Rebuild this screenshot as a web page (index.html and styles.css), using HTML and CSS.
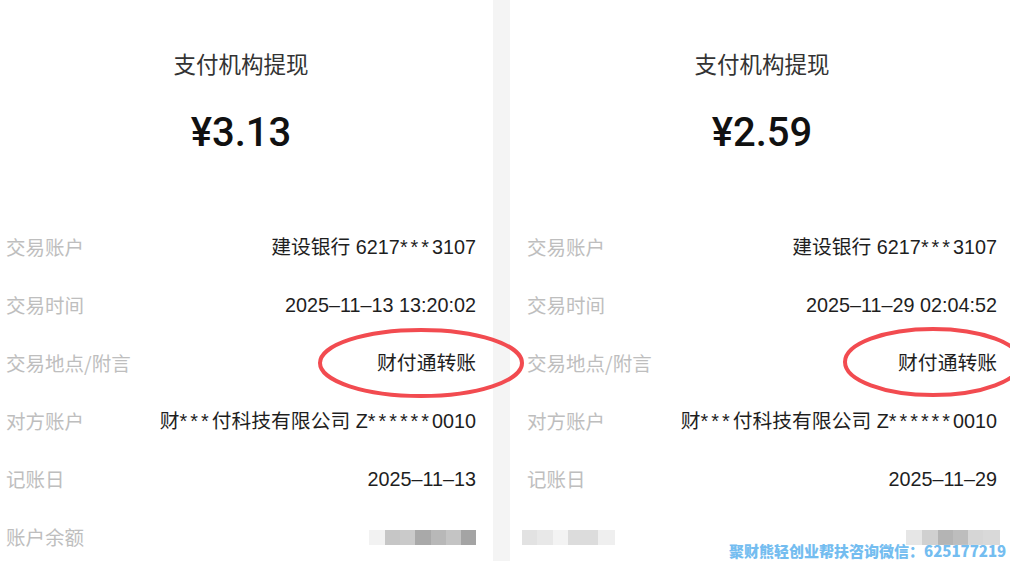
FILE: index.html
```html
<!DOCTYPE html>
<html lang="zh-CN">
<head>
<meta charset="utf-8">
<title>支付机构提现</title>
<link rel="stylesheet" href="styles.css">
</head>
<body>
<div class="page">
  <section class="panel panel-left">
    <h1 class="title">支付机构提现</h1>
    <div class="amount">¥3.13</div>
    <ul class="rows">
      <li class="row"><span class="label">交易账户</span><span class="value">建设银行 6217<span class="mask">***</span>3107</span></li>
      <li class="row"><span class="label">交易时间</span><span class="value">2025–11–13 13:20:02</span></li>
      <li class="row"><span class="label">交易地点/附言</span><span class="value">财付通转账</span></li>
      <li class="row"><span class="label">对方账户</span><span class="value">财<span class="mask">***</span>付科技有限公司 Z<span class="mask">******</span>0010</span></li>
      <li class="row"><span class="label">记账日</span><span class="value">2025–11–13</span></li>
      <li class="row"><span class="label">账户余额</span><span class="blur blur-left-val"></span></li>
    </ul>
  </section>
  <div class="gutter"></div>
  <section class="panel panel-right">
    <h1 class="title">支付机构提现</h1>
    <div class="amount">¥2.59</div>
    <ul class="rows">
      <li class="row"><span class="label">交易账户</span><span class="value">建设银行 6217<span class="mask">***</span>3107</span></li>
      <li class="row"><span class="label">交易时间</span><span class="value">2025–11–29 02:04:52</span></li>
      <li class="row"><span class="label">交易地点/附言</span><span class="value">财付通转账</span></li>
      <li class="row"><span class="label">对方账户</span><span class="value">财<span class="mask">***</span>付科技有限公司 Z<span class="mask">******</span>0010</span></li>
      <li class="row"><span class="label">记账日</span><span class="value">2025–11–29</span></li>
      <li class="row"><span class="blur blur-right-label"></span><span class="blur blur-right-val"></span></li>
    </ul>
  </section>
  <svg class="marks" width="1010" height="561" viewBox="0 0 1010 561" aria-hidden="true">
    <ellipse cx="421" cy="363" rx="101" ry="33" fill="none" stroke="#f24b50" stroke-width="4"/>
    <ellipse cx="933" cy="362" rx="88" ry="33" fill="none" stroke="#f24b50" stroke-width="4"/>
  </svg>
  <div class="watermark">聚财熊轻创业帮扶咨询微信：625177219</div>
</div>
</body>
</html>
```

FILE: styles.css
```css
html, body {
  margin: 0;
  padding: 0;
  background: #ffffff;
}
body {
  width: 1010px;
  height: 561px;
  overflow: hidden;
}
.page {
  position: relative;
  display: flex;
  width: 1010px;
  height: 561px;
  overflow: hidden;
  background: #ffffff;
}
.panel {
  box-sizing: border-box;
  height: 561px;
  padding-top: 48px;
  background: #ffffff;
}
.panel-left {
  width: 493px;
  padding-left: 6px;
  padding-right: 17px;
}
.panel-right {
  width: 500px;
  padding-left: 17px;
  padding-right: 13px;
}
.gutter {
  width: 17px;
  background: #f4f4f4;
}
.title {
  margin: 0;
  font-family: "Noto Sans CJK SC", sans-serif;
  font-weight: 400;
  font-size: 22.5px;
  line-height: 30px;
  color: #333333;
  text-align: center;
}
.amount {
  margin-top: 31px;
  font-family: Roboto, "Liberation Sans", sans-serif;
  font-weight: 500;
  font-size: 40px;
  line-height: 48px;
  color: #111111;
  text-align: center;
}
.rows {
  list-style: none;
  margin: 61px 0 0;
  padding: 0;
}
.row {
  height: 58px;
  display: flex;
  justify-content: space-between;
  align-items: center;
}
.label {
  font-family: "Noto Sans CJK SC", sans-serif;
  font-size: 19.5px;
  line-height: 26px;
  color: #bebebe;
  white-space: nowrap;
}
.value {
  font-family: "Liberation Sans", "Noto Sans CJK SC", sans-serif;
  font-size: 19.8px;
  line-height: 26px;
  color: #1e1e1e;
  white-space: nowrap;
}
.mask {
  letter-spacing: 3px;
}
.blur {
  display: block;
  height: 15px;
}
.blur-left-val {
  width: 107px;
  background: linear-gradient(to right,
    #f2f2f2 0 16px, #c6c6c6 16px 31px, #cacaca 31px 46px,
    #a9a9a9 46px 62px, #b8b8b8 62px 77px, #c4c4c4 77px 92px,
    #a4a4a4 92px 107px);
}
.blur-right-label {
  width: 93px;
  margin-left: -5px;
  background: linear-gradient(to right,
    #e2e2e2 0 15px, #e8e8e8 15px 31px, #f3f3f3 31px 46px,
    #dcdcdc 46px 76px, #efefef 76px 93px);
}
.blur-right-val {
  width: 94px;
  margin-right: -3px;
  background: linear-gradient(to right,
    #e6e6e6 0 16px, #d0d0d0 16px 32px, #b4b4b4 32px 47px,
    #bdbdbd 47px 62px, #d6d6d6 62px 77px, #d9d9d9 77px 94px);
}
.marks {
  position: absolute;
  left: 0;
  top: 0;
  pointer-events: none;
}
.watermark {
  position: absolute;
  left: 729px;
  top: 541px;
  font-family: "Noto Sans CJK SC", sans-serif;
  font-weight: 900;
  font-size: 15px;
  line-height: 20px;
  letter-spacing: 0;
  color: #74bdf0;
  white-space: nowrap;
  text-shadow: 0 0 1px #ffffff;
}
```
